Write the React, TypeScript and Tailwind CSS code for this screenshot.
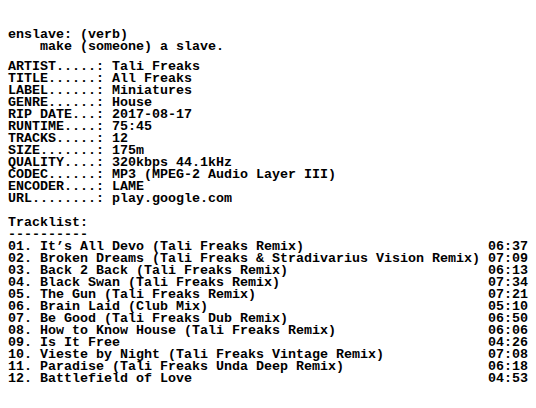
import React from "react";

interface Track {
  no: string;
  title: string;
  time: string;
}

const info: [string, string][] = [
  ["ARTIST.....", "Tali Freaks"],
  ["TITLE......", "All Freaks"],
  ["LABEL......", "Miniatures"],
  ["GENRE......", "House"],
  ["RIP DATE...", "2017-08-17"],
  ["RUNTIME....", "75:45"],
  ["TRACKS.....", "12"],
  ["SIZE.......", "175m"],
  ["QUALITY....", "320kbps 44.1kHz"],
  ["CODEC......", "MP3 (MPEG-2 Audio Layer III)"],
  ["ENCODER....", "LAME"],
  ["URL........", "play.google.com"],
];

const tracks: Track[] = [
  { no: "01", title: "It’s All Devo (Tali Freaks Remix)", time: "06:37" },
  { no: "02", title: "Broken Dreams (Tali Freaks & Stradivarius Vision Remix)", time: "07:09" },
  { no: "03", title: "Back 2 Back (Tali Freaks Remix)", time: "06:13" },
  { no: "04", title: "Black Swan (Tali Freaks Remix)", time: "07:34" },
  { no: "05", title: "The Gun (Tali Freaks Remix)", time: "07:21" },
  { no: "06", title: "Brain Laid (Club Mix)", time: "05:10" },
  { no: "07", title: "Be Good (Tali Freaks Dub Remix)", time: "06:50" },
  { no: "08", title: "How to Know House (Tali Freaks Remix)", time: "06:06" },
  { no: "09", title: "Is It Free", time: "04:26" },
  { no: "10", title: "Vieste by Night (Tali Freaks Vintage Remix)", time: "07:08" },
  { no: "11", title: "Paradise (Tali Freaks Unda Deep Remix)", time: "06:18" },
  { no: "12", title: "Battlefield of Love", time: "04:53" },
];

const App: React.FC = () => {
  const body = [
    ...info.map(([k, v]) => `${k}: ${v}`),
    "",
    "Tracklist:",
    "----------",
    ...tracks.map((t) => `${`${t.no}. ${t.title}`.padEnd(60, " ")}${t.time}`),
  ].join("\n");

  return (
    <div className="w-[536px] h-[408px] bg-white text-black overflow-hidden px-2 pt-[29px] font-['Liberation_Mono',monospace] font-bold text-[13.33px] leading-[12px]">
      <pre className="m-0 font-[inherit] whitespace-pre">
        {"enslave: (verb)\n    make (someone) a slave."}
      </pre>
      <pre className="mt-[8px] font-[inherit] whitespace-pre">{body}</pre>
    </div>
  );
};

export default App;
